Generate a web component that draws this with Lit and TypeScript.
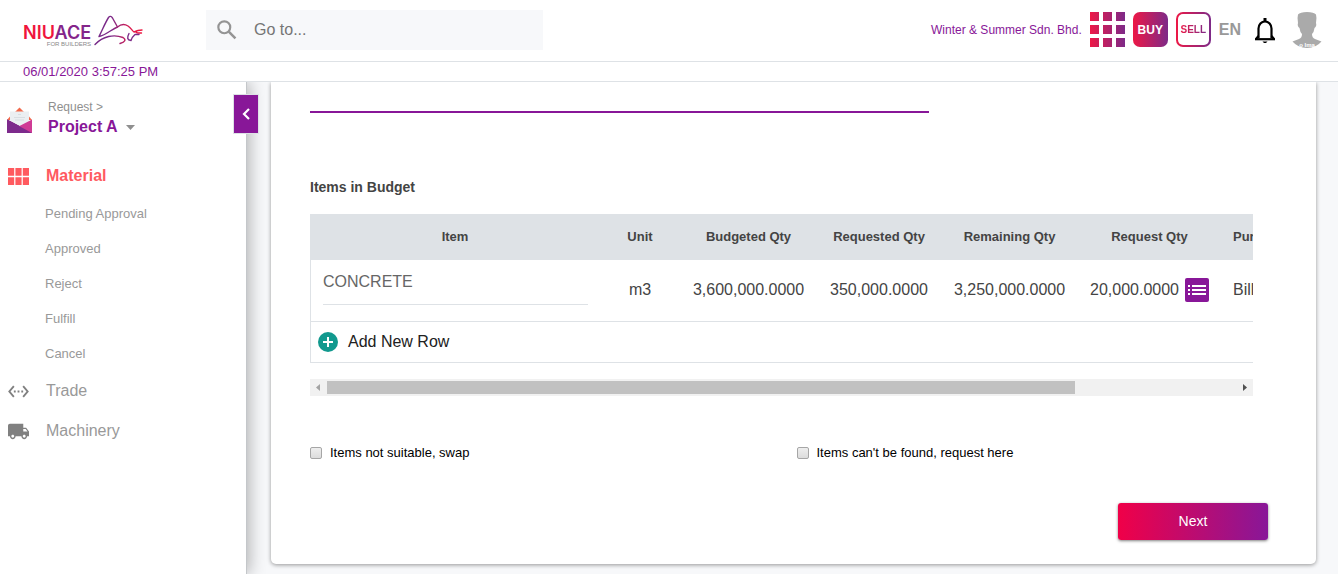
import { LitElement, html, css, svg } from "lit";
import { customElement, state } from "lit/decorators.js";

interface BudgetItem {
  name: string;
  unit: string;
  budgeted: string;
  requested: string;
  remaining: string;
  request: string;
  purpose: string;
}

const materialPages = ["Pending Approval", "Approved", "Reject", "Fulfill", "Cancel"];

const columns = [
  { label: "Item", cls: "c-item" },
  { label: "Unit", cls: "c-unit" },
  { label: "Budgeted Qty", cls: "c-wide" },
  { label: "Requested Qty", cls: "c-mid" },
  { label: "Remaining Qty", cls: "c-wide" },
  { label: "Request Qty", cls: "c-request" },
  { label: "Purpose", cls: "c-purpose" },
];

const items: BudgetItem[] = [
  {
    name: "CONCRETE",
    unit: "m3",
    budgeted: "3,600,000.0000",
    requested: "350,000.0000",
    remaining: "3,250,000.0000",
    request: "20,000.0000",
    purpose: "Bill",
  },
];

@customElement("app-header")
export class AppHeader extends LitElement {
  static styles = css`
    :host {
      display: block;
      background: #fff;
    }
    .bar {
      display: flex;
      align-items: center;
      height: 61px;
      padding: 0 14px 0 23px;
      border-bottom: 1px solid #dee2e6;
      box-sizing: border-box;
      height: 62px;
    }
    .brand {
      display: flex;
      align-items: flex-start;
      gap: 3px;
      width: 183px;
      text-decoration: none;
    }
    .words {
      display: flex;
      flex-direction: column;
      align-items: flex-end;
      padding-top: 10px;
    }
    .name {
      font: 600 18px/16px Inter, sans-serif;
      color: #f0143c;
    }
    .name b {
      font-weight: 600;
      color: #84258a;
    }
    .tag {
      font-size: 6px;
      line-height: 6px;
      color: #888;
    }
    .bull {
      width: 50px;
      height: 32px;
    }
    .search {
      display: flex;
      align-items: center;
      gap: 14px;
      width: 337px;
      height: 40px;
      padding: 0 8px;
      box-sizing: border-box;
      background: #f7f8fa;
    }
    .bar .search {
      margin-bottom: 1px;
    }
    .search svg {
      width: 26px;
      height: 26px;
      flex: none;
    }
    .search input {
      flex: 1;
      min-width: 0;
      border: 0;
      padding: 0;
      background: none;
      outline: none;
      font: 16px/20px "Liberation Sans", Arial, sans-serif;
    }
    .search input::placeholder {
      color: #757575;
      opacity: 1;
    }
    .tools {
      display: flex;
      align-items: center;
      gap: 8px;
      margin-left: auto;
      padding-bottom: 2px;
    }
    .company {
      font-size: 12px;
      line-height: 16px;
      color: #881798;
      text-decoration: none;
    }
    button {
      display: flex;
      align-items: center;
      justify-content: center;
      border: 0;
      padding: 0;
      background: none;
      font-family: inherit;
      cursor: pointer;
    }
    .grid,
    .grid svg {
      width: 35px;
      height: 35px;
    }
    .mode {
      width: 35px;
      height: 35px;
      border-radius: 7px;
      font-size: 12px;
      font-weight: 700;
    }
    .buy {
      color: #fff;
      background: linear-gradient(90deg, #ed1846, #7d2a88);
    }
    .sell {
      box-sizing: border-box;
      border: 2px solid transparent;
      font-size: 10px;
      background:
        linear-gradient(#fff, #fff) padding-box,
        linear-gradient(90deg, #ed1846, #7d2a88) border-box;
    }
    .sell span {
      color: transparent;
      background: linear-gradient(90deg, #ed1846, #7d2a88);
      background-clip: text;
      -webkit-background-clip: text;
    }
    .lang {
      font-size: 16px;
      font-weight: 700;
      color: #999;
    }
    .bell {
      padding: 0 6px 0 5px;
    }
    .bell svg {
      width: 22px;
      height: 28px;
    }
    .face svg {
      width: 34px;
      height: 36px;
    }
    .clock {
      height: 19px;
      padding: 0 23px;
      border-bottom: 1px solid #dee2e6;
      font-size: 13px;
      line-height: 19px;
      color: #881798;
    }
  `;

  render() {
    const cells = [0, 13, 26];
    return html`
      <header class="bar">
        <a class="brand" href="#" aria-label="Niuace for builders">
          <span class="words">
            <span class="name">NIU<b>ACE</b></span>
            <span class="tag">FOR BUILDERS</span>
          </span>
          <svg class="bull" viewBox="0 0 50 32" fill="none" stroke-width="1.4" stroke-linecap="round" stroke-linejoin="round">
            <defs>
              <linearGradient id="b" x1="0" x2="50" y1="0" y2="0" gradientUnits="userSpaceOnUse">
                <stop offset="0" stop-color="#752a88" />
                <stop offset="0.35" stop-color="#7d2a88" />
                <stop offset="0.75" stop-color="#e01b4c" />
                <stop offset="1" stop-color="#f0143c" />
              </linearGradient>
            </defs>
            <g stroke="url(#b)">
              <path d="M5 21.500 C8 16 11 8 14.500 2.500 Q16.500 0 18.500 3 L23.500 12 C18 14 12 20 5 21.500" />
              <path d="M23.500 12 C27 9 31 9 34 11 C37 13 38 15.500 40 17 Q44 15 48 15 M42 16 Q42 18 44 18 H47.500" />
              <path d="M1 29.500 C9 21 20 19 29 22.500 Q34 26 26 28.500" />
            </g>
            <path d="M35 18.500 Q31.500 25 37 25.500 Q38 22 41 19.500 L45 19.500" stroke="#7d2a88" />
          </svg>
        </a>
        <label class="search">
          <svg viewBox="0 0 24 24" fill="none" stroke="#949494" stroke-width="2" aria-hidden="true">
            <circle cx="9.500" cy="9.500" r="5.500" />
            <path d="M13.600 13.600 19.800 19.800" stroke-width="2.300" />
          </svg>
          <input type="text" placeholder="Go to..." aria-label="Go to" />
        </label>
        <div class="tools">
          <a class="company" href="#">Winter &amp; Summer Sdn. Bhd.</a>
          <button class="grid" aria-label="Apps">
            <svg viewBox="0 0 35 35">
              <defs>
                <linearGradient id="g" x1="0" x2="35" y1="0" y2="0" gradientUnits="userSpaceOnUse">
                  <stop stop-color="#ed1846" />
                  <stop offset="1" stop-color="#7d2a88" />
                </linearGradient>
              </defs>
              ${cells.map((y) => cells.map((x) => svg`<rect x=${x} y=${y} width="9" height="9" fill="url(#g)" />`))}
            </svg>
          </button>
          <button class="mode buy">BUY</button>
          <button class="mode sell"><span>SELL</span></button>
          <button class="lang">EN</button>
          <button class="bell" aria-label="Notifications">
            <svg viewBox="0 0 22 28" fill="none" stroke="#000" stroke-width="2.200">
              <path d="M4.500 22V12.500a6.500 7 0 0 1 13 0V22" />
              <path d="M1 23.200h20" />
              <path d="M4.500 20 2 23M17.500 20 20 23" />
              <path d="M11 2v3.500" stroke-width="3" />
              <path d="M8.500 25.500h5l-1.500 1.500h-2z" fill="#000" stroke="none" />
            </svg>
          </button>
          <button class="face" aria-label="Account">
            <svg viewBox="0 0 34 36">
              <path d="M8 2.500 Q10 0 17 0 T26 2.500 Q27 6 26 11 Q27 14 24.500 16 Q24 20 22 22 Q22 26 25 27 L31.500 29.500 Q26 36 17 36 T2.500 29.500 L9 27 Q12 26 12 22 Q10 20 9.500 16 Q7 14 8 11 Q7 6 8 2.500z" fill="#aaa" />
              <text x="17" y="34.500" font-size="6" font-weight="700" text-anchor="middle" fill="#fff">o Ima</text>
            </svg>
          </button>
        </div>
      </header>
      <div class="clock">06/01/2020 3:57:25 PM</div>
    `;
  }
}

@customElement("app-sidebar")
export class AppSidebar extends LitElement {
  static styles = css`
    :host {
      display: block;
      position: relative;
      z-index: 1;
      background: #fff;
      border-right: 1px solid #c4c7ca;
      box-shadow: 2px 0 16px rgba(0, 0, 0, 0.3);
    }
    .project {
      display: flex;
      align-items: center;
      gap: 16px;
      height: 74px;
      padding: 2px 7px 0;
      box-sizing: border-box;
    }
    .project > svg {
      width: 25px;
      height: 26px;
    }
    .crumb {
      display: block;
      font-size: 12px;
      line-height: 18px;
      color: #8f8f8f;
    }
    .pick {
      display: flex;
      align-items: center;
      gap: 8px;
      border: 0;
      padding: 0;
      background: none;
      font: 700 16px/22px "Liberation Sans", Arial, sans-serif;
      color: #881798;
    }
    .project > div {
      padding-bottom: 4px;
    }
    .pick svg {
      width: 9px;
      height: 5px;
    }
    .group {
      display: flex;
      align-items: center;
      gap: 17px;
      height: 40px;
      padding-left: 8px;
      font-size: 16px;
      color: #999;
      text-decoration: none;
    }
    .group svg {
      width: 21px;
      height: 17px;
      fill: #808080;
    }
    .active {
      font-weight: 700;
      color: #ff5a5f;
    }
    .active svg {
      fill: #ff5a5f;
    }
    ul {
      list-style: none;
      margin: 0;
      padding: 0 0 0 45px;
    }
    li a {
      display: block;
      font-size: 13px;
      line-height: 35px;
      color: #999;
      text-decoration: none;
    }
    .toggle {
      position: absolute;
      top: 12px;
      right: -13px;
      display: flex;
      align-items: center;
      justify-content: center;
      width: 26px;
      height: 40px;
      padding: 0;
      border: 1px solid #dee2e6;
      background: #881798;
    }
    .toggle svg {
      width: 8px;
      height: 12px;
    }
  `;

  render() {
    return html`
      <div class="project">
        <svg viewBox="0 0 25 26" aria-hidden="true">
          <path d="M8 5 12.500 0.500 17 5z" fill="#f2694b" />
          <path d="M0 13 3 9.500h19l3 3.500z" fill="#f2694b" />
          <path d="M3 4.500h19V14l-9.500 6L3 14z" fill="#ebeff2" />
          <path d="M11 7.500h3M7 10.500h11M8 13h9" stroke="#d3d9dd" stroke-width=".8" />
          <path d="M0 12.500 12.500 19 25 12.500V26H0z" fill="#cf3a95" />
          <path d="M0 12.500 12.500 19 0 26z" fill="#6d2a80" />
          <path d="M0 26V12.500L25 26z" fill="#7d2a8c" />
        </svg>
        <div>
          <span class="crumb">Request &gt;</span>
          <button class="pick">
            Project A
            <svg viewBox="0 0 9 5" fill="#8f8f8f"><path d="M0 0h9L4.500 5z" /></svg>
          </button>
        </div>
      </div>
      <nav>
        <a class="group active" href="#">
          <svg viewBox="4 5 17 13" preserveAspectRatio="none">
            <path d="M4 11h5V5H4v6zm0 7h5v-6H4v6zm6 0h5v-6h-5v6zm6 0h5v-6h-5v6zm-6-7h5V5h-5v6zm6-6v6h5V5h-5z" />
          </svg>
          Material
        </a>
        <ul>
          ${materialPages.map((p) => html`<li><a href="#">${p}</a></li>`)}
        </ul>
        <a class="group" href="#">
          <svg viewBox="0.700 4 22.600 16">
            <path d="M7.770 6.760 6.230 5.480.82 12l5.410 6.520 1.540-1.280L3.420 12l4.350-5.240zM7 13h2v-2H7v2zm10-2h-2v2h2v-2zm-6 2h2v-2h-2v2zm6.770-7.520-1.540 1.280L20.580 12l-4.350 5.240 1.540 1.280L23.180 12l-5.410-6.520z" />
          </svg>
          Trade
        </a>
        <a class="group" href="#">
          <svg viewBox="1 4 22 16">
            <path d="M20 8h-3V4H3c-1.100 0-2 .9-2 2v11h2c0 1.660 1.340 3 3 3s3-1.340 3-3h6c0 1.660 1.340 3 3 3s3-1.340 3-3h2v-5l-3-4zM6 18.500c-.83 0-1.500-.67-1.500-1.500s.67-1.500 1.500-1.500 1.500.67 1.500 1.500-.67 1.500-1.500 1.500zm13.500-9 1.960 2.500H17V9.500h2.500zm-1.500 9c-.83 0-1.500-.67-1.500-1.500s.67-1.500 1.500-1.500 1.500.67 1.500 1.500-.67 1.500-1.500 1.500z" />
          </svg>
          Machinery
        </a>
      </nav>
      <button class="toggle" aria-label="Collapse menu">
        <svg viewBox="0 0 8 12" fill="none" stroke="#fff" stroke-width="2.200"><path d="M7 1 2 6l5 5" /></svg>
      </button>
    `;
  }
}

@customElement("budget-table")
export class BudgetTable extends LitElement {
  @state() private visibleShare = 748 / 909;

  static styles = css`
    :host {
      display: block;
    }
    .viewport {
      overflow: hidden;
    }
    table {
      width: 1146px;
      table-layout: fixed;
      border-collapse: separate;
      border-spacing: 0;
      color: #444;
    }
    .c-item {
      width: 290px;
    }
    .c-unit {
      width: 80px;
    }
    .c-wide {
      width: 137px;
    }
    .c-mid {
      width: 124px;
    }
    .c-request {
      width: 143px;
    }
    .c-purpose {
      width: 235px;
    }
    th {
      height: 46px;
      padding: 0 12px 2px;
      box-sizing: border-box;
      background: #dee2e6;
      font-size: 13px;
      font-weight: 700;
    }
    td {
      height: 62px;
      padding: 0 12px 2px;
      box-sizing: border-box;
      border-bottom: 1px solid #dee2e6;
      font-size: 16px;
      text-align: center;
      white-space: nowrap;
    }
    td:first-child {
      border-left: 1px solid #dee2e6;
    }
    th:last-child,
    td:last-child {
      text-align: left;
    }
    td.item {
      padding-bottom: 16px;
    }
    .name {
      display: block;
      width: 100%;
      height: 45px;
      padding: 0;
      box-sizing: border-box;
      border: 0;
      border-bottom: 1px solid #dee2e6;
      background: none;
      outline: none;
      font: 16px "Liberation Sans", Arial, sans-serif;
      color: #666;
    }
    .qty {
      display: flex;
      align-items: center;
      justify-content: space-between;
    }
    .list {
      width: 24px;
      height: 24px;
      padding: 0;
      border: 0;
      border-radius: 2px;
      background: #881798;
    }
    .list svg {
      display: block;
      margin: auto;
      width: 18px;
      height: 12px;
      fill: #fff;
    }
    td.adder {
      height: 41px;
      padding: 0 7px;
      text-align: left;
    }
    .add {
      display: flex;
      align-items: center;
      gap: 10px;
      padding: 0;
      border: 0;
      background: none;
      font: 16px/20px "Liberation Sans", Arial, sans-serif;
      color: #212121;
    }
    .add svg {
      width: 20px;
      height: 20px;
    }
    .scroll {
      display: flex;
      height: 17px;
      margin-top: 16px;
      background: #f1f1f1;
    }
    .scroll button {
      width: 17px;
      padding: 0;
      border: 0;
      background: none;
    }
    .scroll svg {
      display: block;
      margin: auto;
      width: 5px;
      height: 7px;
    }
    .track {
      flex: 1;
      padding: 2px 0;
    }
    .thumb {
      height: 13px;
      background: #c1c1c1;
    }
  `;

  render() {
    return html`
      <div class="viewport">
        <table>
          <thead>
            <tr>
              ${columns.map((c) => html`<th class=${c.cls}>${c.label}</th>`)}
            </tr>
          </thead>
          <tbody>
            ${items.map(
              (i) => html`<tr>
                <td class="item"><input class="name" aria-label="Item" .value=${i.name} /></td>
                <td>${i.unit}</td>
                <td>${i.budgeted}</td>
                <td>${i.requested}</td>
                <td>${i.remaining}</td>
                <td>
                  <span class="qty">
                    ${i.request}
                    <button class="list" aria-label="Quantity details">
                      <svg viewBox="0 0 18 12">
                        <path d="M0 1h2v2H0zM0 5h2v2H0zM0 9h2v2H0zM4 1h14v2H4zM4 5h14v2H4zM4 9h14v2H4z" />
                      </svg>
                    </button>
                  </span>
                </td>
                <td>${i.purpose}</td>
              </tr>`
            )}
            <tr>
              <td class="adder" colspan="7">
                <button class="add">
                  <svg viewBox="0 0 20 20">
                    <circle cx="10" cy="10" r="10" fill="#11998e" />
                    <path d="M10 5v10M5 10h10" stroke="#fff" stroke-width="2" />
                  </svg>
                  Add New Row
                </button>
              </td>
            </tr>
          </tbody>
        </table>
      </div>
      <div class="scroll">
        <button aria-label="Scroll left">
          <svg viewBox="0 0 5 7" fill="#a3a3a3"><path d="M4 0v7L0 3.500z" /></svg>
        </button>
        <div class="track">
          <div class="thumb" style="width:${this.visibleShare * 100}%"></div>
        </div>
        <button aria-label="Scroll right">
          <svg viewBox="0 0 5 7" fill="#505050"><path d="M1 0v7l4-3.500z" /></svg>
        </button>
      </div>
    `;
  }
}

@customElement("app-root")
export class AppRoot extends LitElement {
  static styles = css`
    :host {
      display: flex;
      flex-direction: column;
      min-height: 100vh;
      background: #f7f8fa;
      font-family: "Liberation Sans", Arial, sans-serif;
    }
    .body {
      flex: 1;
      display: grid;
      grid-template-columns: 247px minmax(0, 1fr);
      overflow: hidden;
    }
    main {
      padding: 0 22px 10px 24px;
    }
    .card {
      display: flow-root;
      height: 100%;
      padding: 0 48px 24px 24px;
      box-sizing: border-box;
      background: #fff;
      border-radius: 0 0 5px 5px;
      box-shadow: 0 1px 4px rgba(0, 0, 0, 0.4);
    }
    .inset {
      padding: 0 15px;
    }
    .title {
      padding-right: 324px;
    }
    .title input {
      display: block;
      width: 100%;
      height: 31px;
      padding: 0;
      box-sizing: border-box;
      border: 0;
      border-bottom: 2px solid #881798;
      outline: none;
      background: none;
      font: 16px "Liberation Sans", Arial, sans-serif;
    }
    h2 {
      margin: 64px 0 17px;
      font-size: 14px;
      line-height: 20px;
      font-weight: 700;
      color: #444;
    }
    .options {
      display: grid;
      grid-template-columns: 1fr 1fr;
      margin-top: 47px;
    }
    .options label {
      display: flex;
      align-items: center;
      gap: 8px;
      padding: 0 15px;
      font-size: 13px;
      line-height: 20px;
      color: #000;
    }
    .options input {
      appearance: none;
      width: 12px;
      height: 12px;
      margin: 0;
      border: 1px solid #a6a6a6;
      border-radius: 2px;
      background: linear-gradient(#eee, #dcdcdc);
      box-sizing: border-box;
    }
    .actions {
      display: flex;
      justify-content: flex-end;
      margin-top: 40px;
    }
    .next {
      width: 150px;
      height: 37px;
      border: 0;
      border-radius: 3px;
      background: linear-gradient(90deg, #f00048, #881798);
      box-shadow: 0 1px 3px rgba(0, 0, 0, 0.5);
      padding: 0 0 2px;
      font: 14px "Liberation Sans", Arial, sans-serif;
      color: #fff;
    }
  `;

  render() {
    return html`
      <app-header></app-header>
      <div class="body">
        <app-sidebar></app-sidebar>
        <main>
          <section class="card">
            <div class="inset">
              <div class="title"><input type="text" aria-label="Request title" /></div>
              <h2>Items in Budget</h2>
              <budget-table></budget-table>
            </div>
            <div class="options">
              <label><input type="checkbox" />Items not suitable, swap</label>
              <label><input type="checkbox" />Items can't be found, request here</label>
            </div>
            <div class="actions"><button class="next">Next</button></div>
          </section>
        </main>
      </div>
    `;
  }
}
